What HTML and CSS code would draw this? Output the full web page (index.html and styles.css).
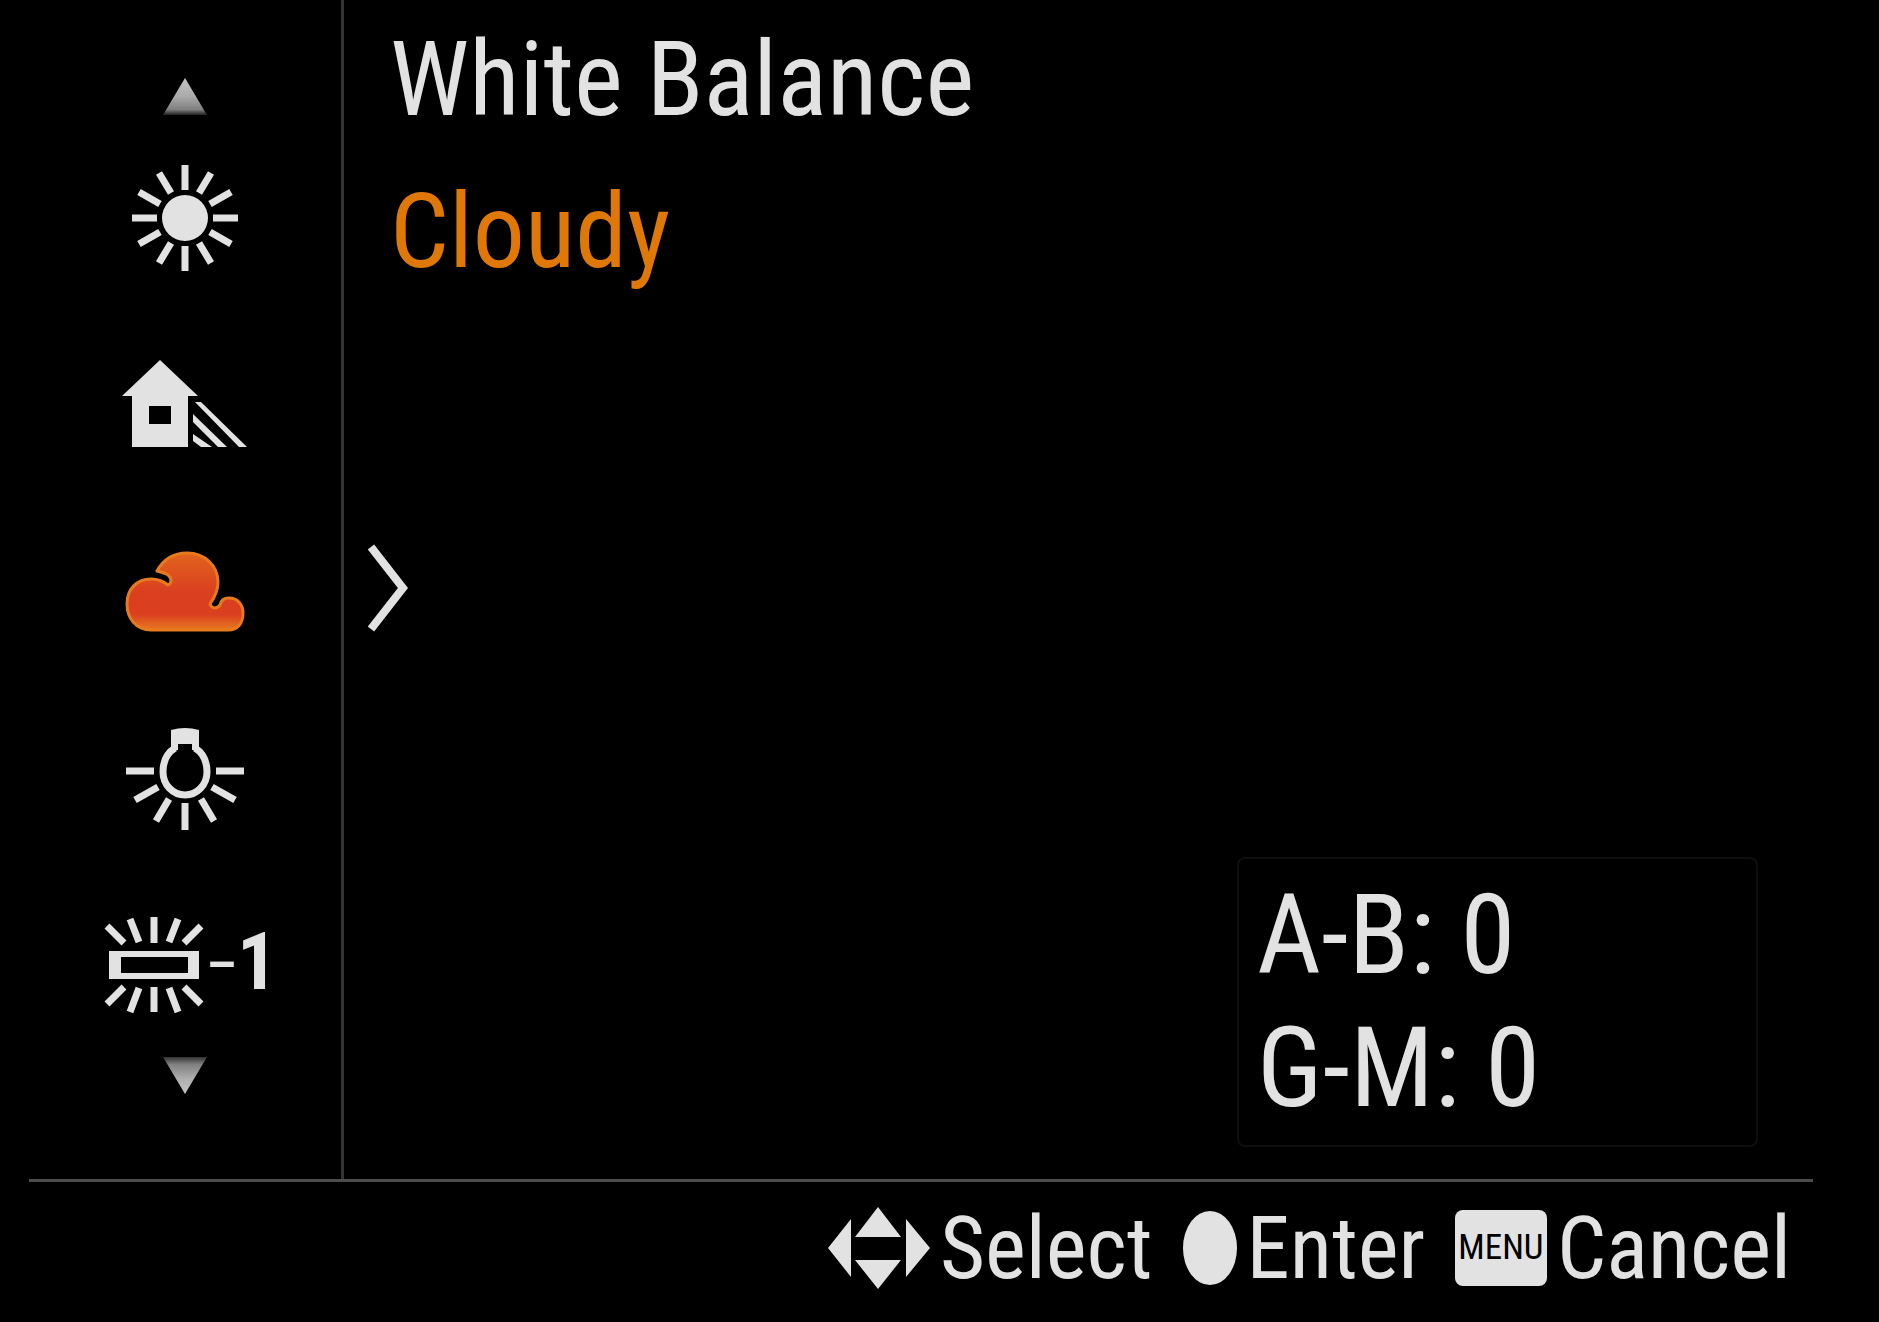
FILE: index.html
```html
<!DOCTYPE html>
<html lang="en">
<head>
    <meta charset="UTF-8">
    <title>White Balance</title>
    <link rel="stylesheet" href="styles.css">
</head>
<body>

<div class="screen">
    <div class="menu">
        <!-- Preset list -->
        <nav class="presets" aria-label="Presets">
            <button class="scroll" aria-label="Previous">
                <svg width="44" height="37" viewBox="0 0 44 37">
                    <defs>
                        <linearGradient id="fadeUp" x1="0" y1="0" x2="0" y2="1">
                            <stop offset="0" stop-color="#c4c4c4"/>
                            <stop offset="0.5" stop-color="#aaa"/>
                            <stop offset="0.85" stop-color="#808080"/>
                            <stop offset="1" stop-color="#222"/>
                        </linearGradient>
                    </defs>
                    <path d="M22 0L44 37H0Z" fill="url(#fadeUp)"/>
                </svg>
            </button>

            <ul class="preset-list">
                <li>
                    <button class="preset" aria-label="Daylight">
                        <svg width="184" height="120" viewBox="-92 -60 184 120">
                            <circle r="23" fill="currentColor"/>
                            <path class="rays" d="M0 -28V-53M14 -25L26 -45M25 -14L46 -26M28 0H53M25 14L46 26M14 25L26 45M0 28V53M-14 25L-26 45M-25 14L-46 26M-28 0H-53M-25 -14L-46 -26M-14 -25L-26 -45"/>
                        </svg>
                    </button>
                </li>
                <li>
                    <button class="preset" aria-label="Shade">
                        <svg width="184" height="120" viewBox="-92 -60 184 120">
                            <path fill="currentColor" fill-rule="evenodd" d="M-25 -45L13 -9H3V42H-53V-9H-63ZM-36 1V19H-14V1Z"/>
                            <path fill="currentColor" d="M10 -3H16L62 42H54ZM8 9L42 42H33L8 17ZM8 29L27 42H16L8 36Z"/>
                        </svg>
                    </button>
                </li>
                <li>
                    <button class="preset selected" aria-label="Cloudy" aria-current="true">
                        <svg width="184" height="120" viewBox="-92 -60 184 120">
                            <defs>
                                <linearGradient id="cloudFill" x1="0" y1="0" x2="0" y2="1">
                                    <stop offset="0" stop-color="#e2641e"/>
                                    <stop offset="0.5" stop-color="#da4020"/>
                                    <stop offset="0.8" stop-color="#da4020"/>
                                    <stop offset="1" stop-color="#e87a20"/>
                                </linearGradient>
                            </defs>
                            <path fill="url(#cloudFill)" stroke="#e87a1e" stroke-width="3" stroke-linejoin="round" d="M-34 38C-49 38 -58 26 -58 12C-58 -3 -48 -13 -34 -13C-28 -13 -22 -11 -17 -7C-13 -9 -13 -14 -17 -17C-20 -19 -24 -20 -28 -21C-22 -32 -12 -39 2 -39C20 -39 33 -26 33 -10C33 -2 30 5 25 12C27 17 32 17 35 13C36 8 39 6 44 6C53 6 58 13 58 21C58 31 53 38 43 38Z"/>
                        </svg>
                        <svg class="pointer" width="40" height="88" viewBox="0 0 40 88">
                            <path d="M3 3L35 44L3 85" fill="none" stroke="currentColor" stroke-width="8"/>
                        </svg>
                    </button>
                </li>
                <li>
                    <button class="preset" aria-label="Incandescent">
                        <svg width="184" height="120" viewBox="-92 -60 184 120">
                            <path fill="currentColor" d="M-14 -49Q0 -53 14 -49V-29H7V-35H-7V-29H-14Z"/>
                            <path class="rays" d="M-10 -31C-18 -26 -22 -17 -22 -7A22 23 0 0 0 22 -7C22 -17 18 -26 10 -31"/>
                            <path class="rays" d="M-31 -8H-59M31 -8H59M-27 8L-50 21M27 8L50 21M-16 20L-29 42M16 20L29 42M0 24V51"/>
                        </svg>
                    </button>
                </li>
                <li>
                    <button class="preset" aria-label="Fluorescent -1">
                        <svg width="184" height="120" viewBox="-92 -60 184 120">
                            <path fill="currentColor" fill-rule="evenodd" d="M-76 -15H14V13H-76ZM-64 -9V7H3V-9Z"/>
                            <path class="rays" d="M-78 -40L-61 -23M-55 -47L-46 -24M-31 -49V-23M-7 -47L-16 -24M16 -40L-1 -23M-78 38L-61 21M-55 46L-46 22M-31 21V46M-7 46L-16 22M16 38L-1 21"/>
                            <text class="lamp-dash" x="21" y="18">–</text>
                            <text class="lamp-number" x="52" y="23">1</text>
                        </svg>
                    </button>
                </li>
            </ul>

            <button class="scroll" aria-label="Next">
                <svg width="44" height="37" viewBox="0 0 44 37">
                    <defs>
                        <linearGradient id="fadeDown" x1="0" y1="0" x2="0" y2="1">
                            <stop offset="0" stop-color="#333"/>
                            <stop offset="0.2" stop-color="#808080"/>
                            <stop offset="0.6" stop-color="#b0b0b0"/>
                            <stop offset="1" stop-color="#c4c4c4"/>
                        </linearGradient>
                    </defs>
                    <path d="M0 0H44L22 37Z" fill="url(#fadeDown)"/>
                </svg>
            </button>
        </nav>

        <!-- Current setting -->
        <main class="detail">
            <h1>White Balance</h1>
            <h2>Cloudy</h2>
            <div class="adjust">
                <p>A-B: 0</p>
                <p>G-M: 0</p>
            </div>
        </main>
    </div>

    <!-- Key guide -->
    <footer class="guide">
        <button class="key">
            <svg width="102" height="82" viewBox="0 0 102 82">
                <path fill="currentColor" d="M50 0L73 30H27ZM50 82L27 53H73ZM0 41L23 12V70ZM102 41L78 12V70Z"/>
            </svg>
            Select
        </button>
        <button class="key">
            <svg width="54" height="74" viewBox="0 0 54 74">
                <ellipse cx="27" cy="37" rx="27" ry="37" fill="currentColor"/>
            </svg>
            Enter
        </button>
        <button class="key">
            <span class="menu-key">MENU</span>
            Cancel
        </button>
    </footer>
</div>

</body>
</html>
```

FILE: styles.css
```css
* {
    box-sizing: border-box;
}
body {
    margin: 0;
    background: #000;
    color: #e2e2e2;
    font-family: "Roboto Condensed", Roboto, Arial, sans-serif;
}
button {
    padding: 0;
    border: none;
    background: none;
    color: inherit;
    font: inherit;
    cursor: pointer;
}
svg {
    display: block;
}
h1, h2, p {
    margin: 0;
    font-weight: normal;
}
.screen {
    display: flex;
    flex-direction: column;
    min-height: 100vh;
}
.menu {
    display: flex;
    flex: 1;
}

/* Preset list */
.presets {
    display: flex;
    flex-direction: column;
    align-items: center;
    width: 344px;
    padding: 78px 0 0 28px;
    border-right: 3px solid #343434;
}
.preset-list {
    display: flex;
    flex-direction: column;
    gap: 67px;
    margin: 43px 0 31px;
    padding: 0;
    list-style: none;
}
.preset {
    display: block;
    position: relative;
}
.pointer {
    position: absolute;
    top: 12px;
    left: 275px;
}
.rays {
    fill: none;
    stroke: currentColor;
    stroke-width: 7;
}
.lamp-dash {
    fill: currentColor;
    font-size: 56px;
    font-weight: 500;
}
.lamp-number {
    fill: currentColor;
    font-size: 80px;
    font-weight: bold;
}

/* Current setting */
.detail {
    display: flex;
    flex: 1;
    flex-direction: column;
    padding: 4px 121px 32px 46px;
}
h1, h2 {
    font-size: 104px;
    line-height: 152px;
}
h2 {
    color: #e07808;
}
.adjust {
    width: 521px;
    margin-top: auto;
    margin-left: auto;
    padding: 10px 18px;
    border: 2px solid #0e0e0e;
    border-radius: 8px;
}
.adjust p {
    font-size: 111px;
    line-height: 133px;
}

/* Key guide */
.guide {
    display: flex;
    justify-content: flex-end;
    gap: 30px;
    height: 143px;
    margin: 0 66px 0 29px;
    padding: 0 22px 8px 0;
    border-top: 3px solid #4c4c4c;
}
.key {
    display: flex;
    align-items: center;
    gap: 10px;
    font-size: 87px;
}
.menu-key {
    width: 92px;
    border-radius: 8px;
    background: #e2e2e2;
    color: #000;
    font-size: 35px;
    line-height: 76px;
    text-align: center;
}
```
